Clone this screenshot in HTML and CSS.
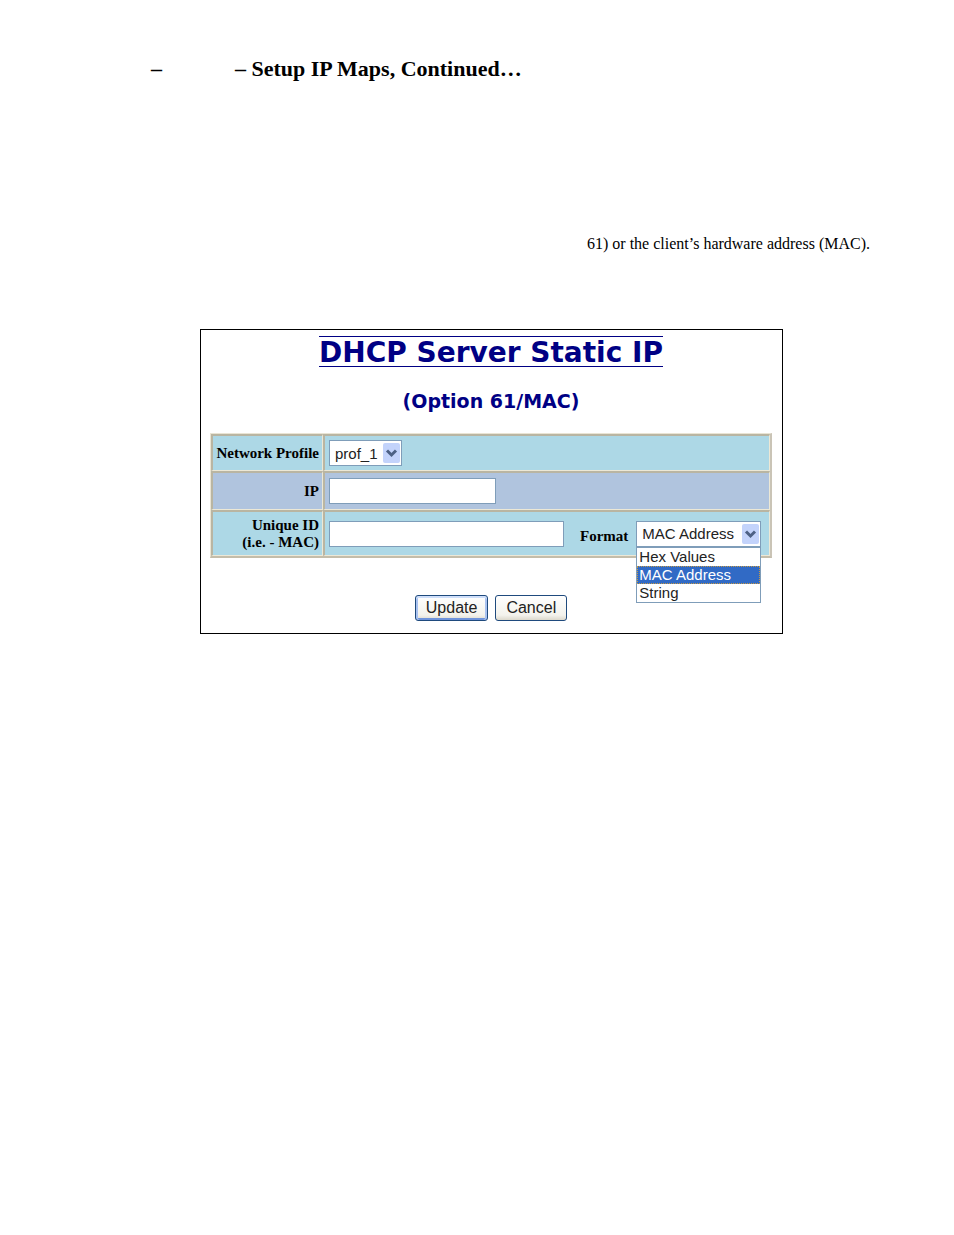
FILE: index.html
```html
<!DOCTYPE html>
<html lang="en">
<head>
    <meta charset="UTF-8">
    <title>Setup IP Maps</title>
    <link rel="stylesheet" href="styles.css">
</head>
<body>
    <main class="page">
        <h1 class="page-title"><span>–</span><span>– Setup IP Maps, Continued…</span></h1>

        <p class="note">61) or the client’s hardware address (MAC).</p>

        <form class="dhcp-form">
            <h2 class="form-title">DHCP Server Static IP</h2>
            <h3 class="form-subtitle">(Option 61/MAC)</h3>

            <table class="fields">
                <tr>
                    <th><label for="profile">Network Profile</label></th>
                    <td>
                        <div class="select-box">
                            <select id="profile" class="profile-select">
                                <option>prof_1</option>
                            </select>
                            <svg class="arrow" viewBox="0 0 17 20">
                                <rect width="17" height="20" rx="2" fill="#c3d3fb"/>
                                <path d="M4 7.5l4.5 4.5 4.5-4.5" fill="none" stroke="#4d6185" stroke-width="3"/>
                            </svg>
                        </div>
                    </td>
                </tr>
                <tr class="alt">
                    <th><label for="ip">IP</label></th>
                    <td><input type="text" id="ip" class="ip-input"></td>
                </tr>
                <tr class="last">
                    <th><label for="unique-id">Unique ID<br>(i.e. - MAC)</label></th>
                    <td>
                        <div class="id-row">
                            <input type="text" id="unique-id" class="id-input">
                            <label for="format" class="format-label">Format</label>
                            <div class="select-box">
                                <select id="format" class="format-select">
                                    <option>Hex Values</option>
                                    <option selected>MAC Address</option>
                                    <option>String</option>
                                </select>
                                <svg class="arrow" viewBox="0 0 17 20">
                                    <rect width="17" height="20" rx="2" fill="#c3d3fb"/>
                                    <path d="M4 7.5l4.5 4.5 4.5-4.5" fill="none" stroke="#4d6185" stroke-width="3"/>
                                </svg>
                                <ul class="menu" role="listbox" aria-label="Format">
                                    <li role="option">Hex Values</li>
                                    <li role="option" class="selected" aria-selected="true">MAC Address</li>
                                    <li role="option">String</li>
                                </ul>
                            </div>
                        </div>
                    </td>
                </tr>
            </table>

            <div class="buttons">
                <button type="submit" class="default">Update</button>
                <button type="button">Cancel</button>
            </div>
        </form>
    </main>
</body>
</html>
```
FILE: styles.css
```css
* {
    margin: 0;
    padding: 0;
    box-sizing: border-box;
}

body {
    background-color: #fff;
    color: #000;
    font-family: "Liberation Serif", "Times New Roman", serif;
}

.page {
    padding: 56px 84px 56px 113px;
}

.page-title {
    display: flex;
    gap: 73px;
    padding-left: 38px;
    font-size: 22px;
    line-height: 26px;
}

.note {
    margin-top: 152px;
    font-size: 16px;
    line-height: 20px;
    text-align: right;
}

.dhcp-form {
    max-width: 583px;
    margin: 75px auto 0;
    padding: 6px 10px 12px 9px;
    border: 1px solid #000;
}

.form-title,
.form-subtitle {
    width: fit-content;
    margin: 0 auto;
    color: #000084;
    font-family: Verdana, "DejaVu Sans", sans-serif;
}

.form-title {
    padding-top: 3px;
    border-top: 1px solid #000084;
    border-bottom: 1px solid #000084;
    font-size: 28px;
    line-height: 26px;
}

.form-subtitle {
    margin-top: 20px;
    font-size: 19px;
    line-height: 28px;
}

.fields {
    width: 100%;
    margin-top: 18px;
    border: 1px solid #e9e4d4;
    border-right: 2px solid #cac4b6;
    border-bottom: 2px solid #c4bdaa;
    border-spacing: 0;
}

.fields th,
.fields td {
    height: 37px;
    padding: 0 3px;
    border: 1px solid #ece8d6;
    border-top: 2px solid #b9b5a2;
    border-left: 2px solid #b9b5a2;
    background-color: #add8e6;
    vertical-align: middle;
}

.fields td {
    padding: 0 4px;
}

.fields th {
    width: 112px;
    font-size: 15px;
    line-height: 17px;
    text-align: right;
    white-space: nowrap;
}

.fields .alt th,
.fields .alt td {
    height: 39px;
    background-color: #b0c4de;
}

.fields .last th,
.fields .last td {
    height: 46px;
}

input,
select {
    display: block;
    height: 26px;
    border: 1px solid #7f9db9;
    border-radius: 0;
    background-color: #fff;
    color: #222;
    font-family: Arial, "Liberation Sans", sans-serif;
    font-size: 15px;
}

select {
    appearance: none;
    padding: 0 5px;
}

.ip-input {
    width: 167px;
}

.id-input {
    width: 235px;
}

.profile-select {
    width: 73px;
}

.format-select {
    width: 125px;
}

.select-box {
    position: relative;
    width: fit-content;
}

.arrow {
    position: absolute;
    top: 3px;
    right: 2px;
    width: 17px;
    height: 20px;
    pointer-events: none;
}

.id-row {
    display: flex;
    align-items: center;
}

.format-label {
    margin: 6px 8px 0 16px;
    font-size: 15px;
    font-weight: bold;
    line-height: 17px;
}

.menu {
    position: absolute;
    top: 25px;
    left: 0;
    width: 100%;
    border: 1px solid #7f9db9;
    border-top-width: 2px;
    background-color: #fff;
    color: #222;
    font-family: Arial, "Liberation Sans", sans-serif;
    font-size: 15px;
    line-height: 18px;
    list-style: none;
}

.menu li {
    padding: 0 2px;
}

.menu .selected {
    outline: 1px dotted #c79a45;
    outline-offset: -1px;
    background-color: #316ac5;
    color: #fff;
}

.buttons {
    display: flex;
    justify-content: center;
    gap: 7px;
    margin-top: 37px;
}

button {
    height: 26px;
    padding: 0 10px;
    border: 1px solid #1f4a7d;
    border-radius: 3px;
    background: linear-gradient(#fff, #f3f2ec 80%, #dcd8cc);
    color: #222;
    font-family: Arial, "Liberation Sans", sans-serif;
    font-size: 16px;
}

.default {
    box-shadow: inset 0 2px #cfdffa, inset 2px 0 #a9c2f0, inset -2px 0 #a9c2f0, inset 0 -2px #6f94dc;
}
```
